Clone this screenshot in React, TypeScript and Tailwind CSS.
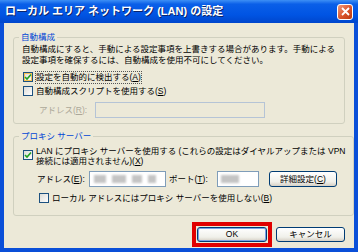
import React from 'react';

const font = { fontFamily: '"Liberation Sans", "Noto Sans CJK JP", sans-serif' };

interface CheckProps {
  checked?: boolean;
  focused?: boolean;
}

const CheckBox: React.FC<CheckProps> = ({ checked, focused }) => (
  <span
    className={`flex h-[10px] w-[10px] shrink-0 items-center justify-center border border-[#1c5180] bg-[linear-gradient(135deg,#dcdcd7,#ffffff)] ${
      focused ? 'shadow-[inset_0_0_0_1px_#f8c252]' : ''
    }`}
  >
    {checked && (
      <svg width="8" height="8" viewBox="0 0 8 8">
        <path d="M1 4 L3 6 L7 1.5" fill="none" stroke="#21a121" strokeWidth="1.6" />
      </svg>
    )}
  </span>
);

const Key: React.FC<{ k: string }> = ({ k }) => (
  <>
    (<span className="underline">{k}</span>)
  </>
);

const Blur: React.FC<{ w: string }> = ({ w }) => (
  <span className={`h-[8px] ${w} bg-[#c4c4c4] blur-[1px]`} />
);

const App: React.FC = () => {
  return (
    <div className="flex h-[252px] w-[358px] flex-col bg-[#0a4fd8] text-[8.5px] leading-[11px] text-black" style={font}>
      {/* タイトルバー */}
      <div className="flex h-[23px] shrink-0 items-center bg-[linear-gradient(to_bottom,#3d8ff5_0%,#0a5fe8_18%,#0054e3_65%,#0046cc_100%)] pl-[5px] pr-[5px]">
        <span className="whitespace-nowrap text-[11px] font-bold text-white [text-shadow:1px_1px_0_#0a246a]">
          ローカル エリア ネットワーク (LAN) の設定
        </span>
        <button className="ml-auto flex h-[16px] w-[16px] items-center justify-center rounded-[3px] border border-white bg-[linear-gradient(135deg,#f09a7c,#d9532a_55%,#b83a12)]">
          <svg width="9" height="9" viewBox="0 0 9 9">
            <path d="M1 1 L8 8 M8 1 L1 8" stroke="white" strokeWidth="1.8" />
          </svg>
        </button>
      </div>

      {/* 本体 */}
      <div className="mx-[4px] mb-[4px] flex flex-1 flex-col bg-[#ece9d8] px-[9px]">
        {/* 自動構成 */}
        <fieldset className="mt-[9px] rounded-[3px] border border-[#d0d0bf] px-[8px] pb-[5px] pt-[1px]">
          <legend className="ml-[-3px] px-[2px] text-[#0046d5]">自動構成</legend>
          <p className="whitespace-nowrap">自動構成にすると、手動による設定事項を上書きする場合があります。手動による</p>
          <p className="whitespace-nowrap">設定事項を確保するには、自動構成を使用不可にしてください。</p>
          <div className="mt-[5px] flex h-[12px] items-center gap-[3px] pl-[1px]">
            <CheckBox checked focused />
            <span className="whitespace-nowrap outline outline-1 outline-dotted outline-[#555]">
              設定を自動的に検出する<Key k="A" />
            </span>
          </div>
          <div className="mt-[2px] flex h-[12px] items-center gap-[3px] pl-[1px]">
            <CheckBox />
            <span className="whitespace-nowrap">
              自動構成スクリプトを使用する<Key k="S" />
            </span>
          </div>
          <div className="mt-[5px] flex items-center pl-[17px]">
            <span className="w-[56px] whitespace-nowrap text-[#aca899]">
              アドレス<Key k="R" />:
            </span>
            <div className="h-[16px] w-[170px] border border-[#b5c4d6] bg-[#ece9d8]" />
          </div>
        </fieldset>

        {/* プロキシ サーバー */}
        <fieldset className="mt-[7px] rounded-[3px] border border-[#d0d0bf] px-[8px] pb-[11px] pt-[4px]">
          <legend className="ml-[-3px] px-[2px] text-[#0046d5]">プロキシ サーバー</legend>
          <div className="flex items-start gap-[3px] pl-[1px] leading-[10px]">
            <span className="mt-[4px]">
              <CheckBox checked />
            </span>
            <span className="whitespace-nowrap">
              LAN にプロキシ サーバーを使用する (これらの設定はダイヤルアップまたは VPN
              <br />
              接続には適用されません)<Key k="X" />
            </span>
          </div>
          <div className="mt-[5px] flex items-center pl-[15px]">
            <span className="w-[52px] whitespace-nowrap">
              アドレス<Key k="E" />:
            </span>
            <div className="flex h-[16px] w-[77px] items-center gap-[6px] border border-[#7f9db9] bg-white pl-[4px]">
              <Blur w="w-[12px]" />
              <Blur w="w-[14px]" />
              <Blur w="w-[10px]" />
              <Blur w="w-[8px]" />
            </div>
            <span className="ml-[3px] w-[48px] whitespace-nowrap">
              ポート<Key k="T" />:
            </span>
            <div className="flex h-[16px] w-[42px] items-center border border-[#7f9db9] bg-white pl-[3px]">
              <Blur w="w-[18px]" />
            </div>
            <button className="ml-[10px] h-[16px] w-[68px] whitespace-nowrap rounded-[3px] border border-[#003c74] bg-[linear-gradient(to_bottom,#ffffff,#f0f0ea_70%,#d6d0c5)]">
              詳細設定<Key k="C" />
            </button>
          </div>
          <div className="mt-[5px] flex h-[12px] items-center gap-[3px] pl-[17px]">
            <CheckBox />
            <span className="whitespace-nowrap">
              ローカル アドレスにはプロキシ サーバーを使用しない<Key k="B" />
            </span>
          </div>
        </fieldset>

        {/* ボタン */}
        <div className="mt-[6px] flex items-center justify-end gap-[4px]">
          <div className="border-4 border-[#e00000] p-[1px]">
            <button className="block h-[15px] w-[70px] rounded-[3px] border border-[#003c74] bg-[linear-gradient(to_bottom,#ffffff,#f0f0ea_70%,#d6d0c5)] shadow-[inset_0_0_0_1px_#7ba2e7]">
              OK
            </button>
          </div>
          <button className="h-[15px] w-[69px] rounded-[3px] border border-[#003c74] bg-[linear-gradient(to_bottom,#ffffff,#f0f0ea_70%,#d6d0c5)]">
            キャンセル
          </button>
        </div>
      </div>
    </div>
  );
};

export default App;
